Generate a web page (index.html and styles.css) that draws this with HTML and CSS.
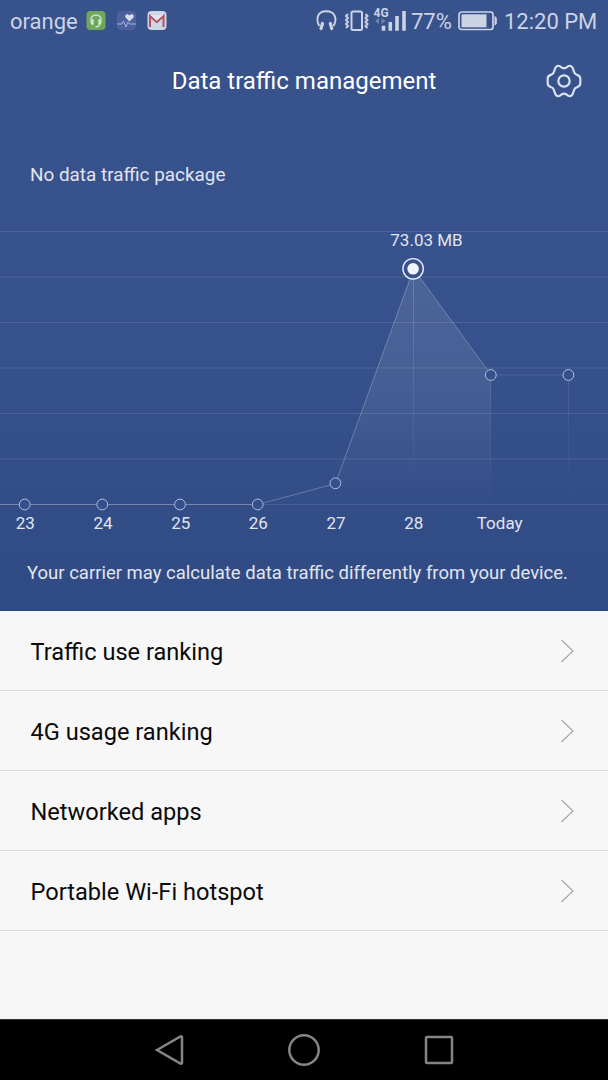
FILE: index.html
```html
<!DOCTYPE html>
<html lang="en">
<head>
<meta charset="utf-8">
<title>Data traffic management</title>
<link rel="stylesheet" href="styles.css">
</head>
<body>
<div class="screen">
  <section class="panel">
    <div class="status">
      <span class="carrier">orange</span>
      <svg class="notices" width="82" height="22" viewBox="0 0 82 22">
        <rect x="1.500" y="1" width="19" height="19" rx="4" fill="#6fa75b"/>
        <path d="M6.500 14c-2-5 0-9 4.500-9s6.500 4 4.500 9" fill="none" stroke="#cfdcd9" stroke-width="1.300"/>
        <path d="M7.500 10v4M14.500 10v4" stroke="#e0eae4" stroke-width="2.200" stroke-linecap="round"/>
        <path d="M14.500 15q-1 2-4 2" fill="none" stroke="#e0eae4" stroke-width="1.500"/>
        <rect x="32" y="1" width="19" height="19" rx="4" fill="#4c5f9f"/>
        <path d="M44.500 11.500l-4-4c-1.400-3 2-4.700 4-2 2-2.700 5.400-1 4 2z" fill="#d8deef"/>
        <path d="M32 14h5l1.500-3 2.500 6 2-5 1.500 2H51" fill="none" stroke="#a9b5d4" stroke-width="1"/>
        <rect x="62.500" y="1" width="19" height="19" rx="4" fill="#cdd5e6"/>
        <path d="M65 17V6l6.800 6L78.500 6v11" fill="none" stroke="#b65360" stroke-width="2"/>
        <path d="M65 5h13.500l-6.700 6z" fill="#e3e6ef"/>
        <path d="M64.500 5.500l7.300 6.500 7.200-6.500" fill="none" stroke="#b65360" stroke-width="1.600"/>
      </svg>
      <svg class="signals" width="94" height="28" viewBox="0 0 94 28">
        <path d="M4.300 22C1 16 1.500 7.300 11.300 7.300S22 16 18.500 22" fill="none" stroke="#cbd3e5" stroke-width="1.900"/>
        <path d="M7.500 19.500L6 24.500M15.300 19.500l1.500 5" stroke="#cbd3e5" stroke-width="3.200" stroke-linecap="round"/>
        <rect x="36.500" y="7.500" width="10.500" height="18.500" rx="1.500" fill="none" stroke="#cbd3e5" stroke-width="2"/>
        <path d="M33 10l-2 2 2 2-2 2 2 2-2 2 2 2-2 2M50.500 10l2 2-2 2 2 2-2 2 2 2-2 2 2 2" fill="none" stroke="#cbd3e5" stroke-width="1.900"/>
        <text class="network" x="58.500" y="12.500">4G</text>
        <path d="M64 14v6l-4-3zM66.500 14v6l4-3z" fill="#7185ae"/>
        <path d="M68.500 21.800v5M75.300 18v8.800M82 12v14.800M89 7v19.800" stroke="#cbd3e5" stroke-width="3.600"/>
      </svg>
      <span class="percent">77%</span>
      <svg class="battery" width="40" height="22" viewBox="0 0 40 22">
        <rect x="1" y="2" width="34" height="17.500" rx="2.500" fill="none" stroke="#cbd3e5" stroke-width="1.700"/>
        <rect x="3.500" y="4.300" width="25" height="13" fill="#cbd3e5"/>
        <path d="M36.500 6.500q1.800.5 1.800 2v4.500q0 1.500-1.800 2" fill="#cbd3e5" stroke="#cbd3e5"/>
      </svg>
      <span class="clock">12:20 PM</span>
    </div>
    <header class="heading">
      <h1 class="title">Data traffic management</h1>
      <svg class="gear" width="40" height="40" viewBox="42 34 120 120">
        <path d="M72 66L76 55Q81 45 90 50Q102 62 114 50Q123 45 128 55L132 66Q133 73 140 75Q151 78 151 87V101Q151 110 140 113Q133 115 132 122L128 133Q123 143 114 138Q102 126 90 138Q81 143 76 133L72 122Q71 115 64 113Q53 110 53 101V87Q53 78 64 75Q71 73 72 66Z"/>
        <circle cx="102" cy="94" r="17"/>
      </svg>
    </header>
    <p class="package">No data traffic package</p>
    <svg class="chart" width="608" height="340" viewBox="0 210 608 340">
      <defs>
        <linearGradient id="area" gradientUnits="userSpaceOnUse" x1="0" y1="270" x2="0" y2="505">
          <stop offset="0" stop-color="#fff" stop-opacity=".11"/>
          <stop offset=".5" stop-color="#fff" stop-opacity=".08"/>
          <stop offset="1" stop-color="#fff" stop-opacity="0"/>
        </linearGradient>
        <linearGradient id="drop" gradientUnits="userSpaceOnUse" x1="0" y1="270" x2="0" y2="500">
          <stop offset="0" stop-color="#fff" stop-opacity=".18"/>
          <stop offset="1" stop-color="#fff" stop-opacity="0"/>
        </linearGradient>
      </defs>
      <path class="grid" d="M0 231.500H608M0 277H608M0 322.500H608M0 368H608M0 413.500H608M0 459H608M0 504.500H608"/>
      <path d="M258 504.500L335.500 483.500 413.500 269 491 375V504.500Z" fill="url(#area)"/>
      <path d="M335.500 490V500M413.500 279V500M490.500 381V500M568.500 381V500" stroke="url(#drop)" fill="none"/>
      <path class="trend" d="M0 504.500H19M31 504.500H96M108 504.500H174M186 504.500H252M263.500 503L330 485M337.500 478L410 279M419.500 277L487.500 370"/>
      <path class="forecast" d="M497 375H563"/>
      <g class="dots">
        <circle cx="24.700" cy="504.500" r="5.400"/><circle cx="102.300" cy="504.500" r="5.400"/>
        <circle cx="180" cy="504.500" r="5.400"/><circle cx="257.700" cy="504.500" r="5.400"/>
        <circle cx="335.400" cy="483.300" r="5.400"/><circle cx="490.800" cy="375" r="5.400"/>
        <circle cx="568.400" cy="375" r="5.400"/>
      </g>
      <circle class="ring" cx="413.100" cy="268.800" r="10.200"/>
      <circle class="core" cx="413.100" cy="268.800" r="5.800"/>
      <g class="labels">
        <text x="426.500" y="246">73.03 MB</text>
        <text x="25.300" y="529">23</text><text x="103" y="529">24</text>
        <text x="180.700" y="529">25</text><text x="258.300" y="529">26</text>
        <text x="336" y="529">27</text><text x="413.700" y="529">28</text>
        <text x="499.700" y="529">Today</text>
      </g>
    </svg>
    <p class="note">Your carrier may calculate data traffic differently from your device.</p>
  </section>
  <ul class="menu">
    <li class="item"><span>Traffic use ranking</span><svg class="chevron" width="14" height="24" viewBox="0 0 14 24"><path d="M1.500 1L13 12 1.500 23"/></svg></li>
    <li class="item"><span>4G usage ranking</span><svg class="chevron" width="14" height="24" viewBox="0 0 14 24"><path d="M1.500 1L13 12 1.500 23"/></svg></li>
    <li class="item"><span>Networked apps</span><svg class="chevron" width="14" height="24" viewBox="0 0 14 24"><path d="M1.500 1L13 12 1.500 23"/></svg></li>
    <li class="item"><span>Portable Wi-Fi hotspot</span><svg class="chevron" width="14" height="24" viewBox="0 0 14 24"><path d="M1.500 1L13 12 1.500 23"/></svg></li>
  </ul>
  <nav class="nav">
    <svg width="34" height="34" viewBox="0 0 34 34"><path d="M5 17L28.500 3.500Q30 3 30 4.500V29.500Q30 31 28.500 30.500Z"/></svg>
    <svg width="34" height="34" viewBox="0 0 34 34"><circle cx="17" cy="17" r="14.700"/></svg>
    <svg width="34" height="34" viewBox="0 0 34 34"><rect x="4" y="4" width="26" height="26" rx="1"/></svg>
  </nav>
</div>
</body>
</html>
```
FILE: styles.css
```css
* { box-sizing: border-box; }
body { margin: 0; font-family: Roboto, "Liberation Sans", sans-serif; }
.screen { width: 608px; height: 1080px; display: flex; flex-direction: column; background: #f7f7f7; overflow: hidden; }
.panel { height: 611px; flex: none; display: flex; flex-direction: column; background: linear-gradient(#38528c 0%, #37518c 60%, #304a84 100%); border-bottom: 1px solid #29427c; }
.status { height: 42px; flex: none; display: flex; align-items: center; padding: 0 10px; color: #cbd3e5; font-size: 22px; white-space: nowrap; }
.carrier { width: 75px; flex: none; }
.notices { flex: none; }
.signals { flex: none; margin-left: 148px; margin-top: -6px; }
.network { font-size: 12px; font-weight: 700; fill: #cbd3e5; }
.percent { margin-left: 2px; width: 47px; flex: none; }
.battery { flex: none; }
.clock { margin-left: 6px; }
.heading { height: 78px; flex: none; display: grid; grid-template-columns: 60px 1fr 60px; justify-items: center; align-items: center; }
.title { grid-column: 2; margin: 0 0 1px; font-size: 24px; font-weight: 400; color: #fff; white-space: nowrap; }
.gear { margin-right: 28px; }
.gear path, .gear circle { fill: none; stroke: #dbe2f0; stroke-width: 6.500; stroke-linejoin: round; }
.package { margin: 43px 0 0 30px; font-size: 18.900px; line-height: 24px; color: #e1e5ef; }
.chart { display: block; flex: none; margin-top: 23px; }
.grid { fill: none; stroke: #fff; stroke-opacity: .11; }
.trend { fill: none; stroke: #fff; stroke-opacity: .25; }
.forecast { fill: none; stroke: #fff; stroke-opacity: .07; stroke-width: 1.500; }
.dots circle { fill: #36508b; stroke: #b4bfda; stroke-width: 1; }
.ring { fill: #38528c; stroke: #e6ebf5; stroke-width: 1.400; }
.core { fill: #f1f3f9; }
.labels text { font-size: 17px; fill: #e1e5ef; text-anchor: middle; }
.note { margin: 11px 0 0 27px; font-size: 18.500px; line-height: 24px; color: #e1e5ef; white-space: nowrap; }
.menu { list-style: none; margin: 0; padding: 0; flex: 1; }
.item { height: 80px; display: flex; justify-content: space-between; align-items: center; padding: 0 34px 0 30.500px; border-bottom: 1px solid #dcdcdc; font-size: 23.600px; color: #0a0a0a; }
.item span { margin-top: 2px; }
.chevron path { fill: none; stroke: #aaa; stroke-width: 1.300; }
.nav { height: 61px; flex: none; display: flex; justify-content: center; align-items: center; gap: 101px; background: #000; border-top: 1px solid #333; }
.nav svg { fill: none; stroke: #858585; stroke-width: 2.500; }
```
